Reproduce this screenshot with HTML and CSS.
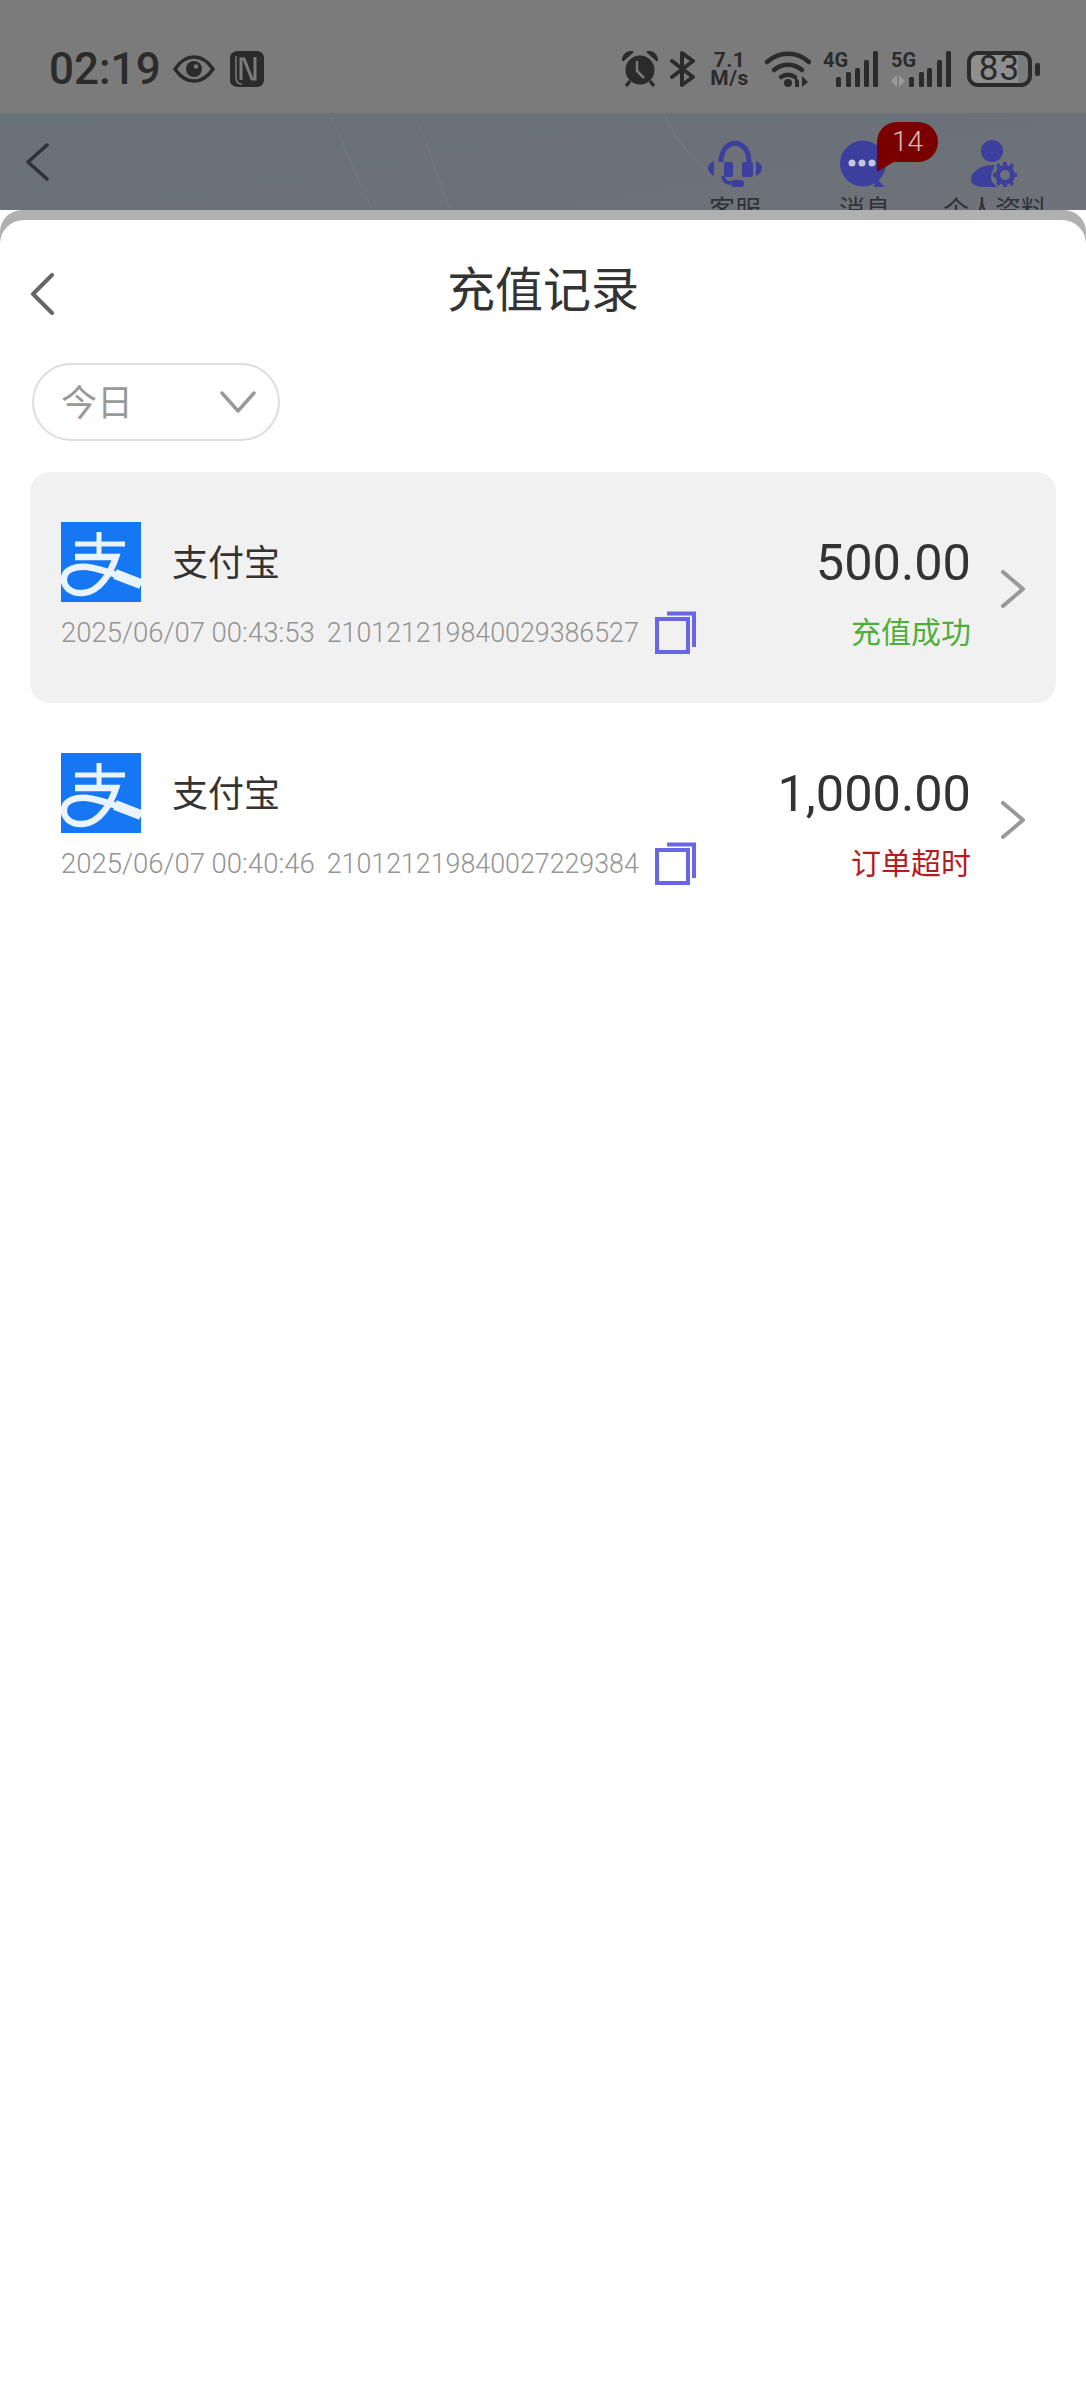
FILE: index.html
```html
<!DOCTYPE html>
<html lang="zh">
<head>
<meta charset="utf-8">
<title>充值记录</title>
<link rel="stylesheet" href="styles.css">
</head>
<body>
<svg width="0" height="0" class="defs">
  <defs>
    <symbol id="alipay" viewBox="0 0 80 80">
      <rect width="80" height="80" fill="#1677f5"/>
      <g fill="none" stroke="#eaf4ff" stroke-width="5">
        <path d="M14 22H64M38 10V35"/>
        <path d="M14 35H55C50 50 39 70 22 71C9 72 2 64 3 56C4 47 15 44 26 45C44 47 62 56 80 62" stroke-width="6.500"/>
        <path d="M54 52L80 62" stroke-width="10"/>
      </g>
    </symbol>
    <symbol id="copy" viewBox="0 0 42 44">
      <rect x="2" y="9" width="31" height="33" fill="none" stroke="currentColor" stroke-width="4"/>
      <path d="M12 3.500H39V37" fill="none" stroke="currentColor" stroke-width="4"/>
    </symbol>
    <symbol id="chev-right" viewBox="0 0 25 38">
      <path d="M2 2L22 19L2 36" fill="none" stroke="currentColor" stroke-width="4" stroke-linecap="round" stroke-linejoin="round"/>
    </symbol>
  </defs>
</svg>

<div class="status-bar">
  <span class="clock">02:19</span>
  <svg class="eye" width="42" height="28" viewBox="0 0 42 28"><path d="M2 14C8 5 14 2 21 2S34 5 40 14C34 23 28 26 21 26S8 23 2 14Z" fill="none" stroke="#2b2b2b" stroke-width="3.500"/><circle cx="21" cy="14" r="8" fill="#2b2b2b"/><circle cx="23" cy="11.500" r="2.200" fill="#7b7b7b"/></svg>
  <svg class="nfc" width="34" height="36" viewBox="0 0 34 36"><path d="M8 0H27C31 0 34 3 34 7V29C34 33 31 36 27 36H8C3 36 0 33 0 29V7C0 3 3 0 8 0Z" fill="#2b2b2b"/><path d="M11 29V8H14L22 28H25V6" fill="none" stroke="#7b7b7b" stroke-width="3"/><path d="M6 5V27C6 31 8 33 12 33" fill="none" stroke="#7b7b7b" stroke-width="1.500"/></svg>
  <div class="status-icons">
    <svg width="36" height="36" viewBox="0 0 36 36"><circle cx="18" cy="19" r="14.500" fill="#2b2b2b"/><path d="M1 9C2 3 6 1 10 1ZM35 9C34 3 30 1 26 1Z" fill="#2b2b2b" stroke="#2b2b2b" stroke-width="2.500" stroke-linejoin="round"/><path d="M15 10V20L22 27" fill="none" stroke="#7b7b7b" stroke-width="2.500"/><path d="M8 30L4 35M28 30L32 35" stroke="#2b2b2b" stroke-width="3.500"/></svg>
    <svg width="25" height="36" viewBox="0 0 25 36"><path d="M2 10L23 26L12 34V2L23 10L2 26" fill="none" stroke="#2b2b2b" stroke-width="4" stroke-linejoin="round" stroke-linecap="round"/></svg>
    <div class="speed"><span class="speed-top">7.1</span><span class="speed-bottom">M/s</span></div>
    <svg class="wifi" width="47" height="37" viewBox="0 0 47 37"><g fill="none" stroke="#2b2b2b" stroke-width="4.500" stroke-linecap="round"><path d="M3 11C15 0 33 0 45 11"/><path d="M10 19C18 12 30 12 38 19"/><path d="M17 26C21 23 27 23 31 26"/></g><circle cx="24" cy="32" r="4" fill="#2b2b2b"/><path d="M31 36V25L35 30V36ZM38 25V36L44 31Z" fill="#2b2b2b"/></svg>
    <svg class="signal" width="56" height="40" viewBox="0 -4 56 40"><text x="0" y="16" class="net">4G</text><g fill="#2b2b2b"><rect x="13" y="26" width="5" height="10" rx="1.500"/><rect x="23" y="21" width="5" height="15" rx="1.500"/><rect x="32" y="17" width="5" height="19" rx="1.500"/><rect x="41" y="9" width="5" height="27" rx="1.500"/><rect x="50" y="0" width="5" height="36" rx="1.500"/></g></svg>
    <svg class="signal" width="60" height="40" viewBox="0 -4 60 40"><text x="0" y="16" class="net">5G</text><path d="M0 30L6 24V36ZM8 24V36L14 30Z" fill="#9a9a9a"/><g fill="#2b2b2b"><rect x="18" y="26" width="5" height="10" rx="1.500"/><rect x="28" y="21" width="5" height="15" rx="1.500"/><rect x="36" y="17" width="5" height="19" rx="1.500"/><rect x="46" y="9" width="5" height="27" rx="1.500"/><rect x="55" y="0" width="5" height="36" rx="1.500"/></g></svg>
    <div class="battery-wrap">
      <div class="battery"><span class="battery-fill"></span><span class="battery-num">83</span></div>
      <span class="battery-nub"></span>
    </div>
  </div>
</div>

<header class="top-header">
  <svg class="streaks" width="1086" height="97" viewBox="0 0 1086 97"><g fill="none" stroke="#7d8188" stroke-width="1.200" opacity=".45"><path d="M329 0L372 97"/><path d="M420 12L450 97"/><path d="M664 0C680 40 710 60 750 97"/></g></svg>
  <svg class="header-back" width="24" height="38" viewBox="0 0 24 38"><path d="M22 2L3 19L22 36" fill="none" stroke="#2e3238" stroke-width="3.500" stroke-linecap="round" stroke-linejoin="round"/></svg>
  <nav class="header-nav">
    <div class="nav-item">
      <svg class="nav-icon" width="54" height="47" viewBox="0 0 54 47"><g fill="#3c3f9e"><path d="M13 22C13 -3 41 -3 41 22" fill="none" stroke="#3c3f9e" stroke-width="5"/><rect x="16" y="22" width="9" height="15" rx="2"/><rect x="34" y="22" width="11" height="15" rx="2"/><path d="M6 21V36C2 34 0 31 0 28S2 23 6 21ZM48 21V36C52 34 54 31 54 28S52 23 48 21Z"/><path d="M15 36C15 41 18 43 24 43" fill="none" stroke="#3c3f9e" stroke-width="3.500"/><rect x="23" y="40" width="13" height="7" rx="3.500"/></g></svg>
      <span class="nav-label">客服</span>
    </div>
    <div class="nav-item">
      <svg class="nav-icon" width="50" height="47" viewBox="0 0 50 47"><circle cx="23" cy="23.500" r="23" fill="#3c3f9e"/><path d="M36 38L45 47H34Z" fill="#3c3f9e"/><g fill="#c3c6dc"><circle cx="12" cy="23" r="3.500"/><circle cx="22" cy="23" r="3.500"/><circle cx="32" cy="23" r="3.500"/></g></svg>
      <span class="nav-label">消息</span>
      <span class="badge">14</span>
    </div>
    <div class="nav-item">
      <svg class="nav-icon" width="48" height="47" viewBox="0 0 48 47"><g fill="#3c3f9e"><circle cx="21" cy="11" r="11"/><path d="M27 47H14C5 47 0 44 0 40C0 31 10 25 24 25C22 30 20 34 20 37C20 41 23 45 27 47Z"/><circle cx="34" cy="35" r="7.500" fill="none" stroke="#3c3f9e" stroke-width="5"/><path d="M32 22H36V26H32ZM32 44H36V47H32ZM22 33H26V37H22ZM42 33H46V37H42ZM25 25L28 23L30 27L27 29ZM38 42L41 40L43 44L40 46ZM43 25L40 23L38 27L41 29ZM30 42L27 40L25 44L28 46Z"/></g></svg>
      <span class="nav-label">个人资料</span>
    </div>
  </nav>
</header>

<div class="sheet-back">
  <main class="sheet">
    <div class="title-row">
      <svg class="sheet-back-icon" width="24" height="42" viewBox="0 0 24 42"><path d="M22 2L3 21L22 40" fill="none" stroke="#666" stroke-width="4" stroke-linecap="round" stroke-linejoin="round"/></svg>
      <h1 class="title">充值记录</h1>
      <span class="title-spacer"></span>
    </div>

    <div class="filter">
      <span class="filter-text">今日</span>
      <svg width="36" height="22" viewBox="0 0 36 22"><path d="M2 2L18 20L34 2" fill="none" stroke="#999" stroke-width="3.500" stroke-linecap="round" stroke-linejoin="round"/></svg>
    </div>

    <section class="records">
      <article class="record record-active">
        <div class="record-main">
          <div class="line-top">
            <svg class="pay-logo" width="80" height="80"><use href="#alipay"/></svg>
            <span class="pay-name">支付宝</span>
          </div>
          <div class="line-bottom">
            <span class="meta date">2025/06/07 00:43:53</span>
            <span class="meta order">210121219840029386527</span>
            <svg class="copy" width="42" height="44"><use href="#copy"/></svg>
          </div>
        </div>
        <div class="record-side">
          <div class="amount">500.00</div>
          <div class="state state-ok">充值成功</div>
        </div>
        <svg class="chev" width="25" height="38"><use href="#chev-right"/></svg>
      </article>

      <article class="record">
        <div class="record-main">
          <div class="line-top">
            <svg class="pay-logo" width="80" height="80"><use href="#alipay"/></svg>
            <span class="pay-name">支付宝</span>
          </div>
          <div class="line-bottom">
            <span class="meta date">2025/06/07 00:40:46</span>
            <span class="meta order">210121219840027229384</span>
            <svg class="copy" width="42" height="44"><use href="#copy"/></svg>
          </div>
        </div>
        <div class="record-side">
          <div class="amount">1,000.00</div>
          <div class="state state-fail">订单超时</div>
        </div>
        <svg class="chev" width="25" height="38"><use href="#chev-right"/></svg>
      </article>
    </section>
  </main>
</div>
</body>
</html>
```
FILE: styles.css
```css
* { box-sizing: border-box; }
html, body { margin: 0; padding: 0; background: #fff; }
body { width: 1086px; height: 2400px; overflow: hidden; font-family: Roboto, "Noto Sans CJK SC", sans-serif; }
.defs { position: absolute; }

.status-bar {
  height: 113px;
  background: #7b7b7b;
  display: flex;
  align-items: center;
  padding: 25px 46px 0 49px;
  color: #2b2b2b;
}
.clock { font-size: 44px; font-weight: 500; line-height: 44px; width: 124px; }
.eye { margin-right: 15px; }
.status-icons { margin-left: auto; display: flex; align-items: center; gap: 12px; }
.speed { display: flex; flex-direction: column; align-items: center; width: 45px; font-size: 21px; font-weight: 700; line-height: 18px; letter-spacing: .5px; }
.speed-top { height: 18px; }
.speed-bottom { height: 18px; }
.signal { margin-top: -4px; }
.net { font-family: Roboto, sans-serif; font-size: 20px; font-weight: 700; fill: #2b2b2b; }
.battery-wrap { display: flex; align-items: center; gap: 3px; margin-left: 4px; }
.battery { position: relative; width: 65px; height: 36px; border: 4px solid #2b2b2b; border-radius: 11px; display: flex; align-items: center; justify-content: center; }
.battery-fill { position: absolute; left: 0; top: 0; bottom: 0; width: 47px; background: #8f8f8f; border-radius: 7px 0 0 7px; }
.battery-num { position: relative; font-size: 35px; font-weight: 400; line-height: 28px; letter-spacing: 1px; }
.battery-nub { width: 5px; height: 13px; border-radius: 2px; background: #2b2b2b; }

.top-header {
  position: relative;
  height: 97px;
  overflow: hidden;
  display: flex;
  padding: 27px 26px 0 25px;
  background: linear-gradient(170deg, #687078 0%, #6c7179 60%, #6f7278 100%);
}
.streaks { position: absolute; left: 0; top: 0; }
.header-back { position: relative; margin-top: 3px; flex: none; }
.header-nav { position: relative; margin-left: auto; display: flex; align-items: flex-start; }
.nav-item { position: relative; width: 130px; display: flex; flex-direction: column; align-items: center; }
.nav-icon { flex: none; }
.nav-label { flex: none; margin-top: 7px; font-size: 26px; line-height: 32px; color: #2e3238; white-space: nowrap; }
.badge {
  position: absolute;
  left: 77px;
  top: -18px;
  width: 61px;
  height: 40px;
  border-radius: 20px 20px 20px 0;
  background: #7a0000;
  color: #d9bcbc;
  font-size: 28px;
  font-weight: 300;
  line-height: 40px;
  text-align: center;
}
.badge::after {
  content: "";
  position: absolute;
  left: 0;
  top: 20px;
  width: 20px;
  height: 30px;
  background: #7a0000;
  clip-path: polygon(0 0, 100% 60%, 0 100%);
}

.sheet-back { min-height: 2190px; background: #b0b0b0; border-radius: 22px 22px 0 0; padding-top: 10px; }
.sheet { min-height: 2180px; background: #fff; border-radius: 24px 24px 0 0; }

.title-row { height: 143px; display: flex; align-items: flex-start; padding: 53px 30px 0; }
.sheet-back-icon { flex: none; }
.title { flex: 1; margin: -18px 0 0; text-align: center; font-size: 48px; font-weight: 400; line-height: 72px; color: #333; }
.title-spacer { width: 24px; flex: none; }

.filter {
  margin-left: 32px;
  width: 248px;
  height: 78px;
  border: 2px solid #ddd;
  border-radius: 39px;
  display: flex;
  align-items: center;
  justify-content: space-between;
  padding: 0 22px 0 27px;
}
.filter-text { font-size: 36px; line-height: 44px; color: #999; padding-top: 3px; }

.records { margin: 31px 30px 0; }
.record { height: 231px; border-radius: 20px; padding: 50px 30px 0 31px; display: flex; align-items: flex-start; }
.record-active { background: #f1f1f1; }
.record-main { flex: 1; }
.line-top { height: 80px; display: flex; align-items: center; gap: 31px; }
.pay-name { font-size: 36px; line-height: 46px; color: #333; padding-top: 3px; }
.line-bottom { margin-top: 8px; height: 44px; display: flex; align-items: center; }
.meta { font-size: 26.800px; line-height: 32px; color: #939393; white-space: nowrap; font-weight: 300; padding-top: 2px; }
.date { font-size: 27.500px; }
.order { margin-left: 12px; }
.copy { margin-left: 16px; color: #6666e6; flex: none; }
.record-side { text-align: right; }
.amount { height: 80px; font-size: 50.500px; line-height: 82px; color: #333; }
.state { margin-top: 8px; height: 44px; font-size: 30px; line-height: 46px; }
.state-ok { color: #4fae3a; }
.state-fail { color: #b71c1c; }
.chev { flex: none; margin: 48px 0 0 30px; color: #999; }
```
